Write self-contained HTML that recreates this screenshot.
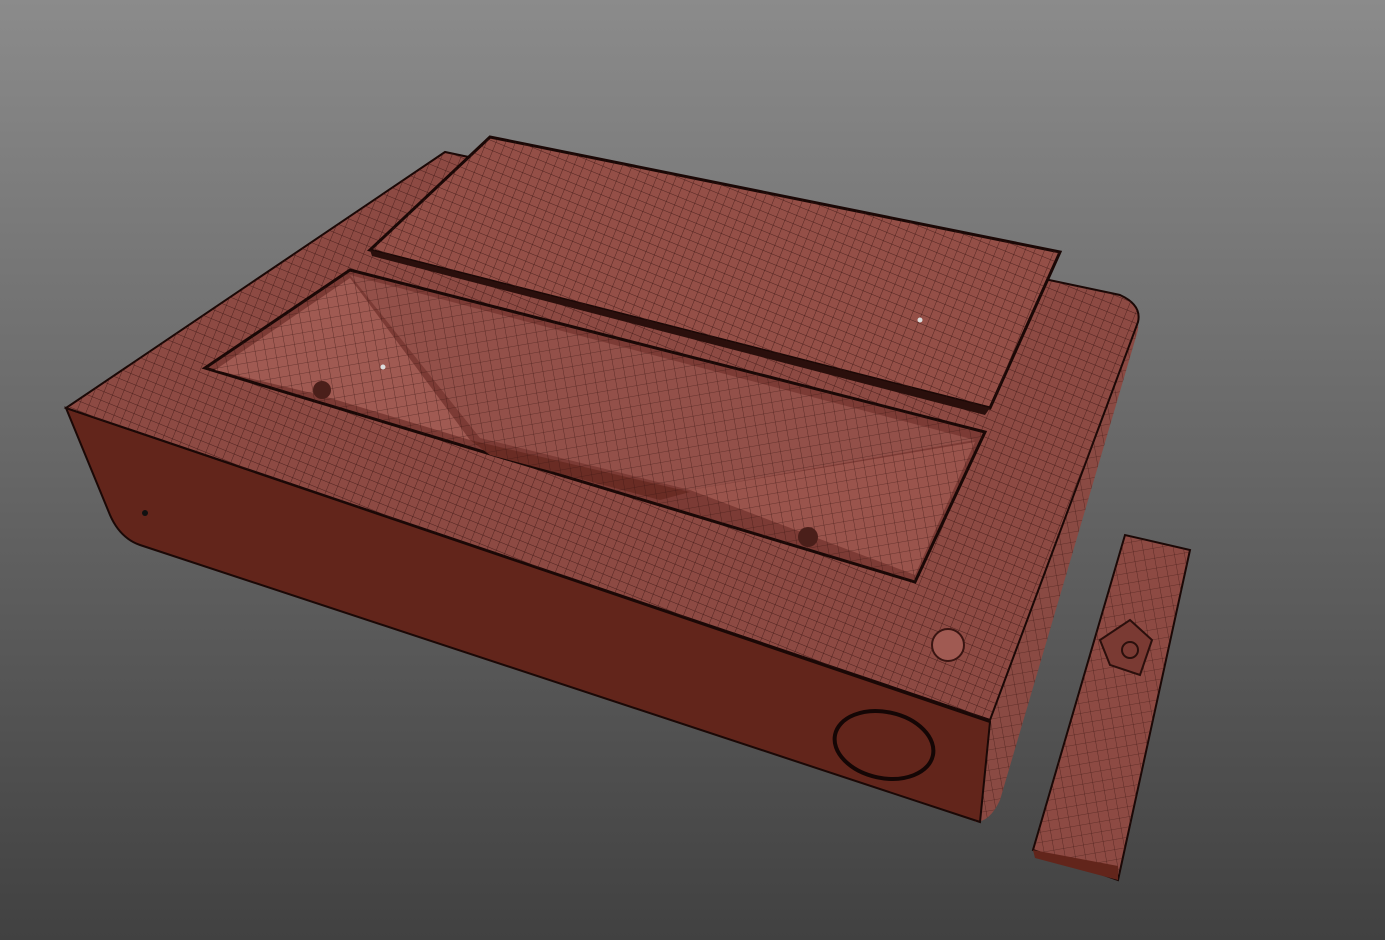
<!DOCTYPE html>
<html><head><meta charset="utf-8"><style>
html,body{margin:0;padding:0;width:1385px;height:940px;overflow:hidden;background:linear-gradient(#8b8b8b,#666 50%,#414141);}
svg{display:block}
</style></head><body>
<svg width="1385" height="940" viewBox="0 0 1385 940" xmlns="http://www.w3.org/2000/svg">
<defs>
<pattern id="g" width="9" height="9" patternUnits="userSpaceOnUse" patternTransform="rotate(22)">
<path d="M0 0H9M0 0V9" stroke="#3a1512" stroke-width="0.7" fill="none"/>
</pattern>
<pattern id="g2" width="10" height="10" patternUnits="userSpaceOnUse" patternTransform="rotate(-10)">
<path d="M0 0H10M0 0V10" stroke="#3a1512" stroke-width="0.6" fill="none"/>
</pattern>
</defs>
<!-- right side -->
<path d="M985 718 L1120 300 Q1140 305 1138 330 L1000 800 Q990 822 975 822 Z" fill="#8a4a43"/>
<path d="M985 718 L1120 300 Q1140 305 1138 330 L1000 800 Q990 822 975 822 Z" fill="url(#g2)"/>
<!-- front face -->
<path d="M66 408 L990 722 L980 822 L140 545 Q120 538 110 515 Z" fill="#62251b" stroke="#1a0806" stroke-width="2"/>
<circle cx="145" cy="513" r="3" fill="#111"/>
<ellipse cx="884" cy="745" rx="50" ry="33" transform="rotate(12 884 745)" fill="none" stroke="#140605" stroke-width="4"/>
<!-- top surface -->
<path d="M66 408 L445 152 L1120 295 Q1142 305 1138 322 L990 720 Z" fill="#8d4a43" stroke="#1a0806" stroke-width="2"/>
<path d="M66 408 L445 152 L1120 295 Q1142 305 1138 322 L990 720 Z" fill="url(#g)"/>
<!-- cavity -->
<path d="M205 368 L350 270 L985 432 L915 582 Z" fill="#7c3b35" stroke="#1a0806" stroke-width="3"/>
<path d="M350 275 L480 438 L690 490 L975 440 Z" fill="#935049"/>
<path d="M215 370 L350 278 L470 440 L320 395 Z" fill="#a05a52"/>
<path d="M690 490 L975 442 L915 575 Z" fill="#9a544c"/>
<path d="M470 440 L690 492 L660 500 L490 455 Z" fill="#6a2c24"/>
<path d="M205 368 L350 270 L985 432 L915 582 Z" fill="url(#g2)"/>
<circle cx="322" cy="390" r="9" fill="#4a1f1a"/>
<circle cx="808" cy="537" r="10" fill="#4a1f1a"/>
<circle cx="383" cy="367" r="2.5" fill="#ddd"/>
<!-- lid -->
<path d="M370 250 L490 137 L1060 252 L990 408 Z" fill="#944f47" stroke="#1a0806" stroke-width="3"/>
<path d="M370 250 L490 137 L1060 252 L990 408 Z" fill="url(#g)"/>
<path d="M370 250 L990 408 L985 415 L372 256 Z" fill="#2a0f0c"/>
<circle cx="920" cy="320" r="2.5" fill="#ddd"/>
<!-- button -->
<circle cx="948" cy="645" r="16" fill="#a05a52" stroke="#3a1512" stroke-width="2"/>
<!-- remote -->
<path d="M1033 850 L1125 535 L1190 550 L1118 880 Z" fill="#8d4a43" stroke="#1a0806" stroke-width="2"/>
<path d="M1033 850 L1125 535 L1190 550 L1118 880 Z" fill="url(#g2)"/>
<path d="M1033 850 L1118 866 L1118 880 L1035 858 Z" fill="#62251b"/>
<path d="M1130 620 L1152 640 L1140 675 L1110 665 L1100 640 Z" fill="#7a3a33" stroke="#2a0f0c" stroke-width="2"/>
<circle cx="1130" cy="650" r="8" fill="none" stroke="#2a0f0c" stroke-width="2"/>
</svg>
</body></html>
